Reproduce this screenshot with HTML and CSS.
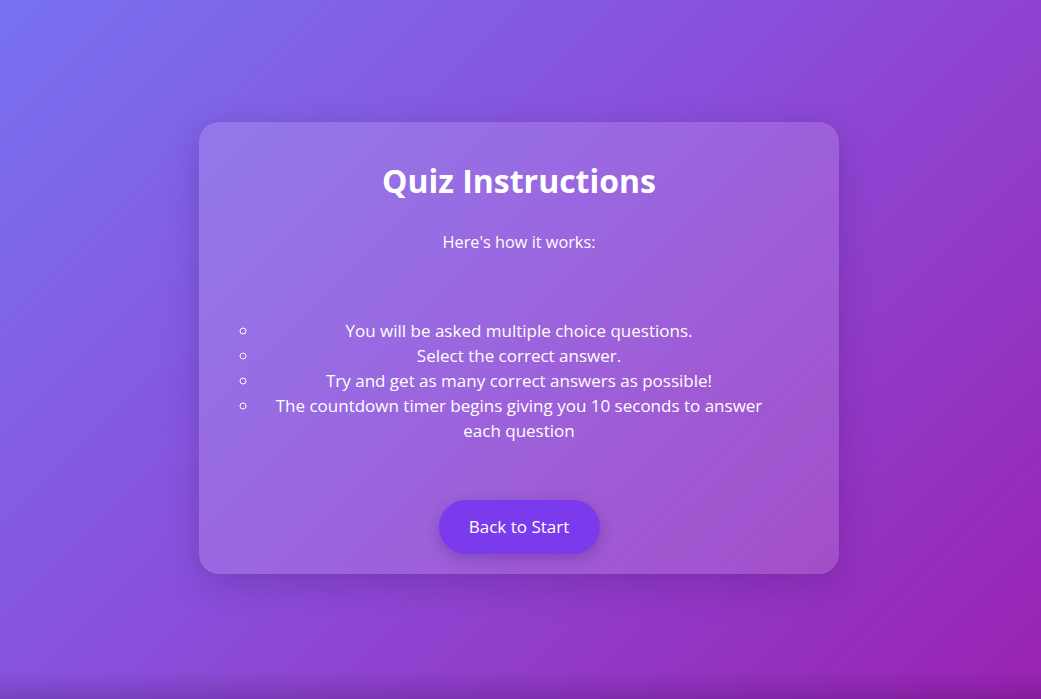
FILE: index.html
```html
<!DOCTYPE html>
<html lang="en">
<head>
<meta charset="utf-8">
<title>Quiz Instructions</title>
<link rel="stylesheet" href="styles.css">
</head>
<body>
<main class="page">
  <section class="card">
    <h1 class="title">Quiz Instructions</h1>
    <p class="intro">Here's how it works:</p>
    <ul class="rules">
      <li>You will be asked multiple choice questions.</li>
      <li>Select the correct answer.</li>
      <li>Try and get as many correct answers as possible!</li>
      <li>The countdown timer begins giving you 10 seconds to answer each question</li>
    </ul>
    <button class="btn" type="button">Back to Start</button>
  </section>
</main>
</body>
</html>
```

FILE: styles.css
```css
* { box-sizing: border-box; }

html, body {
  margin: 0;
  height: 100%;
}

body {
  font-family: "Open Sans", "Liberation Sans", sans-serif;
  color: #ffffff;
  background:
    linear-gradient(to top, rgba(40, 0, 60, 0.18), rgba(40, 0, 60, 0) 28px),
    linear-gradient(135deg, #7872f0 0%, #8a4fdb 45%, #9a22b2 100%);
}

.page {
  height: 100%;
  display: flex;
  align-items: center;
  justify-content: center;
}

.card {
  width: 640px;
  height: 452px;
  margin: 0 3px 4px 0;
  padding: 40px 20px 20px;
  border-radius: 20px;
  background: rgba(255, 255, 255, 0.14);
  box-shadow: 0 10px 34px rgba(40, 10, 90, 0.22);
  text-align: center;
  display: flex;
  flex-direction: column;
  align-items: center;
}

.title {
  margin: 0;
  font-size: 32px;
  line-height: 38px;
  font-weight: 700;
}

.intro {
  margin: 30px 0 0;
  font-size: 16.3px;
  line-height: 24px;
}

.rules {
  align-self: stretch;
  margin: 64px 0 0;
  padding: 0 40px;
  list-style: circle;
  font-size: 17px;
  line-height: 25px;
}

.btn {
  margin-top: 57px;
  padding: 0 20px;
  height: 54px;
  width: 161px;
  border: none;
  border-radius: 27px;
  background: #7c3aed;
  color: #ffffff;
  font-family: inherit;
  font-size: 17px;
  box-shadow: 0 4px 14px rgba(60, 20, 120, 0.3);
}
```
